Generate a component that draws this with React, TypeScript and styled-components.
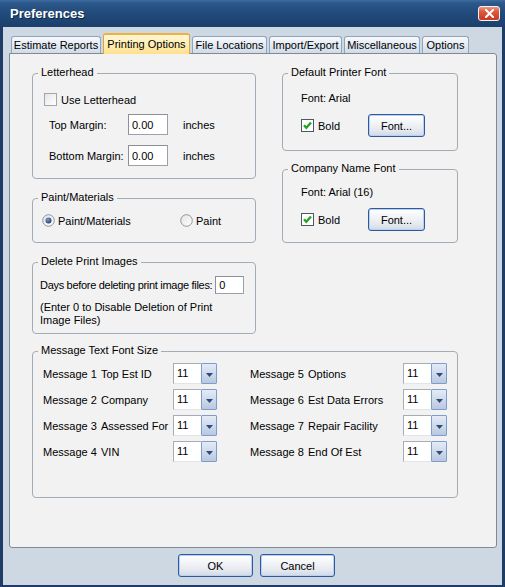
import React from 'react';
import styled, { createGlobalStyle } from 'styled-components';

const Global = createGlobalStyle`
  html, body { margin: 0; padding: 0; width: 505px; height: 587px; overflow: hidden; background: #1f3e68; }
  body { font-family: "Liberation Sans", Arial, sans-serif; font-size: 11px; color: #000; }
  * { box-sizing: border-box; }
`;

const Window = styled.div`
  width: 505px;
  height: 587px;
  display: flex;
  flex-direction: column;
  background: #1e3c66;
`;

const TitleBar = styled.div`
  height: 27px;
  flex: none;
  display: flex;
  align-items: center;
  justify-content: space-between;
  padding: 0 5px 0 10px;
  background: linear-gradient(#3d6ca3 0%, #2b5789 12%, #21497a 55%, #1c3f6b 100%);
`;

const Title = styled.div`
  color: #fff;
  font-weight: bold;
  font-size: 13px;
  text-shadow: 1px 1px 0 #0f2747;
`;

const CloseBtn = styled.div`
  width: 22px;
  height: 15px;
  border: 1px solid #f4f4f4;
  border-radius: 3px;
  background: linear-gradient(#ec9a82 0%, #de5a3e 35%, #c9391f 100%);
  display: flex;
  align-items: center;
  justify-content: center;
`;

const Body = styled.div`
  flex: 1;
  margin: 0 3px 2px 3px;
  background: #cdd8e2;
  display: flex;
  flex-direction: column;
  padding: 6px 5px 8px 6px;
`;

const TabRow = styled.div`
  display: flex;
  align-items: flex-end;
  gap: 2px;
  padding-left: 2px;
  height: 20px;
  position: relative;
  z-index: 1;
`;

const Tab = styled.div<{ $active?: boolean; $w: number }>`
  width: ${p => p.$w}px;
  height: ${p => (p.$active ? 21 : 17)}px;
  margin-bottom: ${p => (p.$active ? -1 : 0)}px;
  display: flex;
  align-items: center;
  justify-content: center;
  padding-bottom: ${p => (p.$active ? 2 : 0)}px;
  white-space: nowrap;
  border: 1px solid ${p => (p.$active ? '#e3a240' : '#8fa5bd')};
  border-top: ${p => (p.$active ? '2px solid #f0b040' : '1px solid #8fa5bd')};
  border-bottom: none;
  border-radius: 3px 3px 0 0;
  background: ${p =>
    p.$active
      ? 'linear-gradient(#fff6d4 0%, #ffedb0 55%, #ffdf8c 100%)'
      : 'linear-gradient(#f6f8fb 0%, #e4ebf2 50%, #cfdbe7 100%)'};
`;

const Panel = styled.div`
  height: 495px;
  flex: none;
  border: 1px solid #7f8a95;
  border-radius: 0 3px 3px 3px;
  background: #f2f2f2;
  padding: 19px 0 0 22px;
`;

const Columns = styled.div`
  display: flex;
  align-items: flex-start;
  gap: 26px;
`;

const Column = styled.div<{ $gap: number }>`
  display: flex;
  flex-direction: column;
  gap: ${p => p.$gap}px;
`;

const Group = styled.div<{ $w: number; $h: number; $mt?: number }>`
  position: relative;
  width: ${p => p.$w}px;
  height: ${p => p.$h}px;
  margin-top: ${p => p.$mt ?? 0}px;
  border: 1px solid #a2acb7;
  border-radius: 4px;
`;

const Legend = styled.span`
  position: absolute;
  top: -8px;
  left: 5px;
  padding: 0 3px;
  background: #f2f2f2;
  line-height: 13px;
  white-space: nowrap;
`;

const Stack = styled.div<{ $pt: number; $pl: number }>`
  display: flex;
  flex-direction: column;
  align-items: flex-start;
  padding: ${p => p.$pt}px 0 0 ${p => p.$pl}px;
`;

const Line = styled.div`
  line-height: 13px;
  white-space: nowrap;
`;

const CheckRow = styled.label<{ $w?: number }>`
  display: flex;
  align-items: center;
  gap: 4px;
  height: 13px;
  width: ${p => (p.$w ? `${p.$w}px` : 'auto')};
  white-space: nowrap;
`;

const Box = styled.span<{ $checked?: boolean }>`
  width: 13px;
  height: 13px;
  flex: none;
  display: flex;
  align-items: center;
  justify-content: center;
  border: 1px solid ${p => (p.$checked ? '#4a5868' : '#a3a7ab')};
  background: ${p => (p.$checked ? '#fff' : 'linear-gradient(135deg, #e6e6e6, #ffffff)')};
`;

const MarginGrid = styled.div`
  display: grid;
  grid-template-columns: 79px 55px auto;
  row-gap: 10px;
  align-items: center;
  margin: 8px 0 0 5px;
`;

const TextBox = styled.input<{ $w: number; $h: number; $ml?: number }>`
  width: ${p => p.$w}px;
  height: ${p => p.$h}px;
  margin-left: ${p => p.$ml ?? 0}px;
  border: 1px solid #9ba1a8;
  border-top-color: #8a9098;
  border-left-color: #8a9098;
  background: #fff;
  padding: 0 0 0 3px;
  font: inherit;
  color: #000;
  outline: none;
`;

const Row = styled.div<{ $mt?: number }>`
  display: flex;
  align-items: center;
  margin-top: ${p => p.$mt ?? 0}px;
  white-space: nowrap;
`;

const TightLabel = styled.span`
  letter-spacing: -0.3px;
  white-space: nowrap;
`;

const PushButton = styled.button<{ $w: number }>`
  width: ${p => p.$w}px;
  height: 23px;
  padding: 0;
  border: 1px solid #2c5a9c;
  border-radius: 3px;
  background: linear-gradient(#ffffff 0%, #f4f5f8 35%, #e3e7ee 75%, #d2d9e4 100%);
  box-shadow: inset 0 0 0 1px #b9d0f3;
  font: inherit;
  color: #000;
`;

const RadioOption = styled.label<{ $w?: number }>`
  display: flex;
  align-items: center;
  gap: 3px;
  height: 13px;
  width: ${p => (p.$w ? `${p.$w}px` : 'auto')};
  white-space: nowrap;
`;

const Note = styled.div`
  width: 185px;
  line-height: 13px;
  margin-top: 7px;
`;

const MsgColumns = styled.div`
  display: flex;
  gap: 33px;
  padding: 11px 0 0 10px;
`;

const MsgColumn = styled.div`
  display: flex;
  flex-direction: column;
  gap: 5px;
`;

const MsgRow = styled.div<{ $lw: number }>`
  display: grid;
  grid-template-columns: 58px ${p => p.$lw}px 44px;
  align-items: center;
  height: 21px;
  white-space: nowrap;
`;

const Combo = styled.div`
  display: flex;
  width: 44px;
  height: 21px;
`;

const ComboValue = styled.div`
  flex: 1;
  background: #fff;
  border: 1px solid #a7adb5;
  border-right: none;
  border-bottom-color: #e2e4e8;
  padding-left: 3px;
  line-height: 19px;
`;

const DropBtn = styled.div`
  width: 16px;
  height: 21px;
  border: 1px solid #7d9dd0;
  border-radius: 1px;
  background: linear-gradient(#e4ebf6 0%, #cdd8ea 55%, #b9c8df 100%);
  display: flex;
  align-items: center;
  justify-content: center;
  padding-top: 2px;
`;

const ButtonRow = styled.div`
  display: flex;
  justify-content: center;
  gap: 7px;
  margin-top: 6px;
  padding-left: 7px;
`;

const Check = ({ checked }: { checked?: boolean }) => (
  <Box $checked={checked}>
    {checked && (
      <svg width="11" height="11" viewBox="0 0 11 11">
        <path d="M2 5.2 L4.3 7.8 L9 2.4" fill="none" stroke="#22a322" strokeWidth="2.3" />
      </svg>
    )}
  </Box>
);

const Radio = ({ checked }: { checked?: boolean }) => (
  <svg width="13" height="13" viewBox="0 0 13 13">
    <defs>
      <linearGradient id="rg" x1="0" y1="0" x2="1" y2="1">
        <stop offset="0" stopColor="#e2e2e2" />
        <stop offset="1" stopColor="#ffffff" />
      </linearGradient>
      <radialGradient id="dot" cx="0.4" cy="0.35" r="0.7">
        <stop offset="0" stopColor="#7e9ccc" />
        <stop offset="1" stopColor="#1d3a66" />
      </radialGradient>
    </defs>
    <circle cx="6.5" cy="6.5" r="5.8" fill="url(#rg)" stroke="#8e959c" strokeWidth="1" />
    {checked && <circle cx="6.5" cy="6.5" r="3" fill="url(#dot)" />}
  </svg>
);

const Arrow = () => (
  <svg width="7" height="4" viewBox="0 0 7 4">
    <polygon points="0,0 7,0 3.5,4" fill="#2c4b7e" />
  </svg>
);

const ComboBox = ({ value }: { value: string }) => (
  <Combo>
    <ComboValue>{value}</ComboValue>
    <DropBtn>
      <Arrow />
    </DropBtn>
  </Combo>
);

const leftMsgs = [
  ['Message 1', 'Top Est ID'],
  ['Message 2', 'Company'],
  ['Message 3', 'Assessed For'],
  ['Message 4', 'VIN'],
];
const rightMsgs = [
  ['Message 5', 'Options'],
  ['Message 6', 'Est Data Errors'],
  ['Message 7', 'Repair Facility'],
  ['Message 8', 'End Of Est'],
];

const tabs: { label: string; w: number; active?: boolean }[] = [
  { label: 'Estimate Reports', w: 90 },
  { label: 'Printing Options', w: 87, active: true },
  { label: 'File Locations', w: 75 },
  { label: 'Import/Export', w: 73 },
  { label: 'Miscellaneous', w: 76 },
  { label: 'Options', w: 47 },
];

export default function App() {
  return (
    <>
      <Global />
      <Window>
        <TitleBar>
          <Title>Preferences</Title>
          <CloseBtn>
            <svg width="9" height="9" viewBox="0 0 9 9">
              <path d="M1 1 L8 8 M8 1 L1 8" stroke="#fff" strokeWidth="2" strokeLinecap="square" />
            </svg>
          </CloseBtn>
        </TitleBar>
        <Body>
          <TabRow>
            {tabs.map(t => (
              <Tab key={t.label} $w={t.w} $active={t.active}>
                {t.label}
              </Tab>
            ))}
          </TabRow>
          <Panel>
            <Columns>
              <Column $gap={19}>
                <Group $w={224} $h={106}>
                  <Legend>Letterhead</Legend>
                  <Stack $pt={19} $pl={11}>
                    <CheckRow>
                      <Check />
                      Use Letterhead
                    </CheckRow>
                    <MarginGrid>
                      <span>Top Margin:</span>
                      <TextBox $w={40} $h={21} value="0.00" readOnly />
                      <span>inches</span>
                      <span>Bottom Margin:</span>
                      <TextBox $w={40} $h={21} value="0.00" readOnly />
                      <span>inches</span>
                    </MarginGrid>
                  </Stack>
                </Group>
                <Group $w={224} $h={45}>
                  <Legend>Paint/Materials</Legend>
                  <Stack $pt={15} $pl={9}>
                    <Row>
                      <RadioOption $w={138}>
                        <Radio checked />
                        Paint/Materials
                      </RadioOption>
                      <RadioOption>
                        <Radio />
                        Paint
                      </RadioOption>
                    </Row>
                  </Stack>
                </Group>
                <Group $w={224} $h={72}>
                  <Legend>Delete Print Images</Legend>
                  <Stack $pt={13} $pl={7}>
                    <Row>
                      <TightLabel>Days before deleting print image files:</TightLabel>
                      <TextBox $w={29} $h={18} $ml={3} value="0" readOnly />
                    </Row>
                    <Note>(Enter 0 to Disable Deletion of Print Image Files)</Note>
                  </Stack>
                </Group>
              </Column>
              <Column $gap={18}>
                <Group $w={176} $h={78}>
                  <Legend>Default Printer Font</Legend>
                  <Stack $pt={18} $pl={18}>
                    <Line>Font: Arial</Line>
                    <Row $mt={9}>
                      <CheckRow $w={67}>
                        <Check checked />
                        Bold
                      </CheckRow>
                      <PushButton $w={57}>Font...</PushButton>
                    </Row>
                  </Stack>
                </Group>
                <Group $w={176} $h={74}>
                  <Legend>Company Name Font</Legend>
                  <Stack $pt={16} $pl={18}>
                    <Line>Font: Arial (16)</Line>
                    <Row $mt={9}>
                      <CheckRow $w={67}>
                        <Check checked />
                        Bold
                      </CheckRow>
                      <PushButton $w={57}>Font...</PushButton>
                    </Row>
                  </Stack>
                </Group>
              </Column>
            </Columns>
            <Group $w={426} $h={147} $mt={17}>
              <Legend>Message Text Font Size</Legend>
              <MsgColumns>
                <MsgColumn>
                  {leftMsgs.map(([a, b]) => (
                    <MsgRow key={a} $lw={72}>
                      <span>{a}</span>
                      <span>{b}</span>
                      <ComboBox value="11" />
                    </MsgRow>
                  ))}
                </MsgColumn>
                <MsgColumn>
                  {rightMsgs.map(([a, b]) => (
                    <MsgRow key={a} $lw={95}>
                      <span>{a}</span>
                      <span>{b}</span>
                      <ComboBox value="11" />
                    </MsgRow>
                  ))}
                </MsgColumn>
              </MsgColumns>
            </Group>
          </Panel>
          <ButtonRow>
            <PushButton $w={75}>OK</PushButton>
            <PushButton $w={75}>Cancel</PushButton>
          </ButtonRow>
        </Body>
      </Window>
    </>
  );
}
